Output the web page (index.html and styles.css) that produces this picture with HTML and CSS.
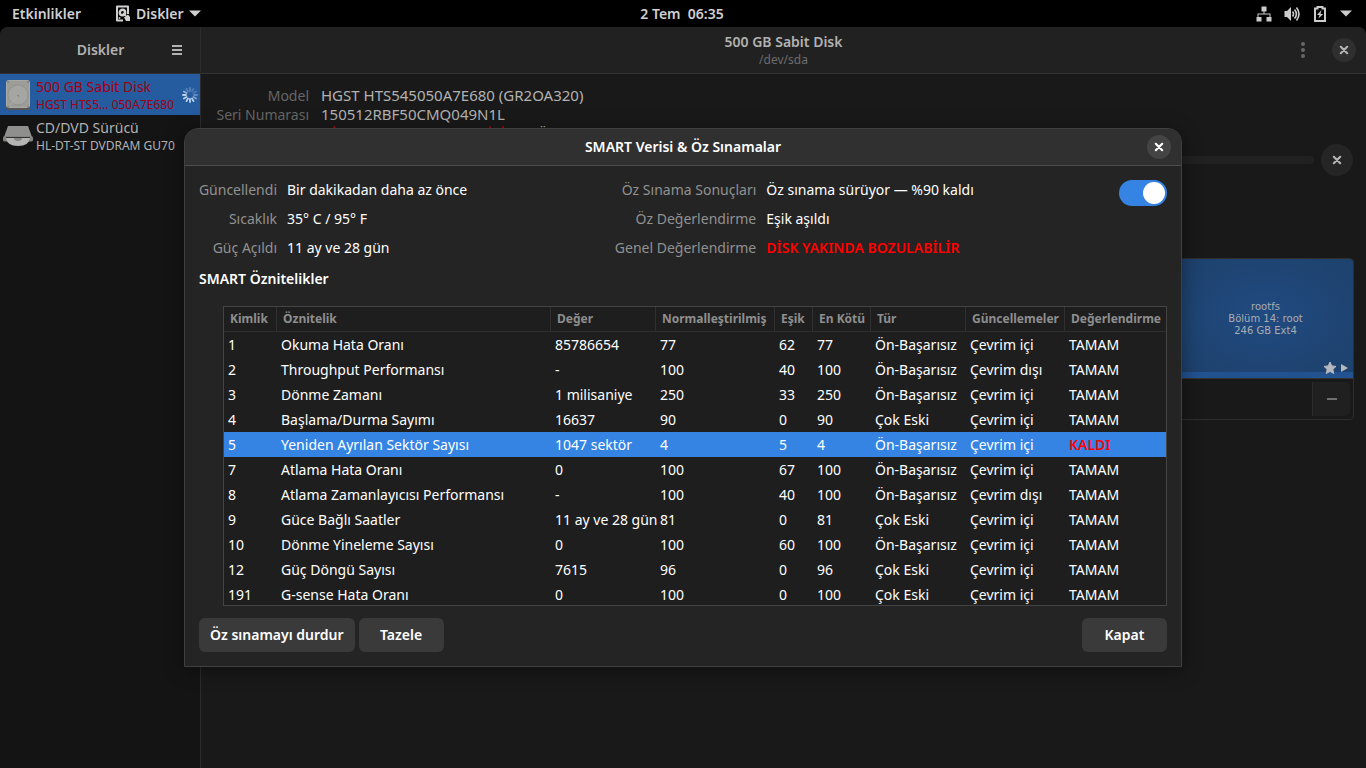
FILE: index.html
```html
<!DOCTYPE html>
<html lang="tr">
<head>
<meta charset="utf-8">
<title>Diskler</title>
<link rel="stylesheet" href="styles.css">
</head>
<body>
<svg class="defs" aria-hidden="true">
  <symbol id="close" viewBox="0 0 16 16"><path d="M4.800 4.800l6.400 6.400M11.200 4.800l-6.400 6.400" fill="none" stroke="currentColor" stroke-width="2.200" stroke-linecap="round"/></symbol>
</svg>

<header class="topbar">
  <div class="topbar-left">
    <button class="top-item">Etkinlikler</button>
    <button class="top-item app-menu">
      <svg width="17" height="17" viewBox="0 0 17 17">
        <path d="M9 15.500H3V1.500H14V9" fill="none" stroke="currentColor" stroke-width="2" stroke-linejoin="round"/>
        <circle cx="8.500" cy="7.500" r="2.700" fill="none" stroke="currentColor" stroke-width="2.400"/>
        <path d="M9 8l3 3" stroke="currentColor" stroke-width="1.600"/>
        <path d="M10 12.500l4-3 2 2.500v4h-4z" fill="currentColor"/>
        <circle cx="5.500" cy="13" r="1" fill="currentColor"/>
      </svg>
      <span>Diskler</span>
      <svg width="12" height="7" viewBox="0 0 12 7"><path d="M0 0.500h12L6 6.500z" fill="currentColor"/></svg>
    </button>
  </div>
  <button class="top-item clock">2 Tem&nbsp; 06:35</button>
  <button class="top-item status" aria-label="Sistem menüsü">
    <svg width="16" height="16" viewBox="0 0 16 16"><path d="M5.500 0.500h5v5h-2v2h6v3.500h1v4.500h-5v-4.500h3v-2.500h-11v2.500h3v4.500h-5v-4.500h1V7.500h6v-2h-2z" fill="currentColor"/></svg>
    <svg width="16" height="16" viewBox="0 0 16 16"><path d="M0.500 5H3l4-4v14l-4-4H0.500z" fill="currentColor"/><path d="M8.500 5.500q2 2.500 0 5M10.500 3.500q3.800 4.500 0 9M12.500 1.500q5 6.500 0 13" fill="none" stroke="currentColor" stroke-width="1.600"/></svg>
    <svg width="16" height="16" viewBox="-2 0 16 16"><path d="M1 2.500h2.500V1h5v1.500H11V15H1z" fill="none" stroke="currentColor" stroke-width="2"/><path d="M7.500 4L3 9h2.500l-1 3.500L9.200 8H6.500z" fill="currentColor"/></svg>
    <svg width="12" height="7" viewBox="0 0 12 7"><path d="M0 0.500h12L6 6.500z" fill="currentColor"/></svg>
  </button>
</header>

<div class="window">
  <aside class="sidebar">
    <div class="bar side-bar">
      <h1 class="bar-title">Diskler</h1>
      <button class="hamburger" aria-label="Menü"><svg width="12" height="12" viewBox="0 0 12 12"><path d="M1 2h10M1 6h10M1 10h10" stroke="currentColor" stroke-width="2"/></svg></button>
    </div>
    <ul class="drives">
      <li class="drive selected">
        <svg class="drive-icon" width="32" height="32" viewBox="0 0 32 32">
          <rect x="4" y="2" width="24" height="29" rx="3" fill="#555"/>
          <rect x="4" y="1" width="24" height="28" rx="3" fill="#a9a9a6"/>
          <rect x="5" y="2" width="22" height="26" rx="2" fill="#9c9c98"/>
          <circle cx="16" cy="16" r="10" fill="#a5a5a1" stroke="#93938f"/>
          <circle cx="16" cy="17" r="1.200" fill="#888"/>
          <path d="M16 17l-8 9" stroke="#b0b0ac"/>
          <path d="M5.500 3h1M25.500 3h1M5.500 28h1M25.500 28h1" stroke="#444"/>
        </svg>
        <div class="drive-text"><span class="drive-name">500 GB Sabit Disk</span><span class="drive-model">HGST HTS5… 050A7E680</span></div>
        <svg class="spinner" width="16" height="16" viewBox="-8 -8 16 16" stroke="#bcd0ea" stroke-width="1.800" stroke-linecap="round">
          <path d="M-4 0h-3"/><path d="M-3.500 2l-2.600 1.500M-2 3.500l-1.500 2.600M0 4v3M2 3.500l1.500 2.600" /><path d="M3.500 2l2.600 1.500" opacity=".6"/><path d="M4 0h3" opacity=".4"/><path d="M3.500-2l2.600-1.500M2-3.500l1.500-2.600" opacity=".25"/><path d="M0-4v-3M-2-3.500l-1.500-2.600" opacity=".35"/><path d="M-3.500-2l-2.600-1.500" opacity=".75"/>
        </svg>
      </li>
      <li class="drive">
        <svg class="drive-icon" width="32" height="32" viewBox="0 0 32 32">
          <path d="M6 6h20l4 11H2z" fill="#8f8f8d"/>
          <path d="M3 17h26q-2 9-13 9T3 17z" fill="#b5b5b3"/>
          <path d="M3 16h26q2 0 2 2v2q0 1.500-2 1.500h-2L28 18H4l1 3.500H3q-2 0-2-1.500v-2q0-2 2-2z" fill="#858583"/>
          <path d="M4 17.500h24" stroke="#333"/>
          <path d="M12 18h8q0 3-4 3t-4-3z" fill="#858583"/>
        </svg>
        <div class="drive-text"><span class="drive-name">CD/DVD Sürücü</span><span class="drive-model">HL-DT-ST DVDRAM GU70</span></div>
      </li>
    </ul>
  </aside>

  <main class="content">
    <div class="bar main-bar">
      <div class="main-title"><h2 class="bar-title">500 GB Sabit Disk</h2><span class="subtitle">/dev/sda</span></div>
      <div class="bar-actions">
        <button class="dots" aria-label="Sürücü seçenekleri"><svg width="6" height="18" viewBox="0 0 6 18"><circle cx="3" cy="3" r="2" fill="currentColor"/><circle cx="3" cy="9" r="2" fill="currentColor"/><circle cx="3" cy="15" r="2" fill="currentColor"/></svg></button>
        <button class="round" aria-label="Pencereyi kapat"><svg width="16" height="16"><use href="#close"/></svg></button>
      </div>
    </div>
    <div class="details">
      <dl class="info">
        <dt>Model</dt><dd>HGST HTS545050A7E680 (GR2OA320)</dd>
        <dt>Seri Numarası</dt><dd>150512RBF50CMQ049N1L</dd>
        <dt>Değerlendirme</dt><dd><b class="failing">DİSK YAKINDA BOZULABİLİR</b> — Öz sınama</dd>
      </dl>
      <div class="job">
        <div class="job-track"></div>
        <button class="round large" aria-label="İşi iptal et"><svg width="16" height="16"><use href="#close"/></svg></button>
      </div>
      <section class="volumes">
        <div class="volume-row">
          <div class="volume">
            <span>rootfs</span><span>Bölüm 14: root</span><span>246 GB Ext4</span>
            <svg class="marks" width="28" height="14" viewBox="0 0 28 14"><path d="M7 1l1.800 3.900 4.200.5-3.100 2.900.8 4.200L7 10.400l-3.700 2.100.8-4.200L1 5.400l4.200-.5z" fill="#b5b8bd" stroke="#b5b8bd"/><path d="M18 3v8l7-4z" fill="#b5b8bd"/></svg>
          </div>
        </div>
        <div class="volume-tools"><button class="minus" aria-label="Bölümü sil"><svg width="10" height="2"><rect width="10" height="2" fill="#707070"/></svg></button></div>
      </section>
    </div>
  </main>

  <div class="overlay">
    <div class="dialog" role="dialog" aria-labelledby="dlg-title">
      <header class="dialog-bar">
        <h2 class="dialog-title" id="dlg-title">SMART Verisi &amp; Öz Sınamalar</h2>
        <button class="round dialog-close" aria-label="Kapat"><svg width="16" height="16"><use href="#close"/></svg></button>
      </header>
      <div class="dialog-body">
        <div class="summary">
          <dl class="facts facts-left">
            <dt>Güncellendi</dt><dd>Bir dakikadan daha az önce</dd>
            <dt>Sıcaklık</dt><dd>35° C / 95° F</dd>
            <dt>Güç Açıldı</dt><dd>11 ay ve 28 gün</dd>
          </dl>
          <dl class="facts facts-right">
            <dt>Öz Sınama Sonuçları</dt><dd>Öz sınama sürüyor — %90 kaldı</dd>
            <dt>Öz Değerlendirme</dt><dd>Eşik aşıldı</dd>
            <dt>Genel Değerlendirme</dt><dd class="failing">DİSK YAKINDA BOZULABİLİR</dd>
          </dl>
          <input class="switch" type="checkbox" role="switch" aria-label="SMART etkin" checked>
        </div>
        <h3 class="section-title">SMART Öznitelikler</h3>
        <div class="table-box">
          <table class="attributes">
            <colgroup><col class="c-id"><col class="c-name"><col class="c-value"><col class="c-norm"><col class="c-thr"><col class="c-worst"><col class="c-type"><col class="c-upd"><col class="c-assess"></colgroup>
            <thead><tr><th>Kimlik</th><th>Öznitelik</th><th>Değer</th><th>Normalleştirilmiş</th><th>Eşik</th><th>En Kötü</th><th>Tür</th><th>Güncellemeler</th><th>Değerlendirme</th></tr></thead>
            <tbody>
              <tr><td>1</td><td>Okuma Hata Oranı</td><td>85786654</td><td>77</td><td>62</td><td>77</td><td>Ön-Başarısız</td><td>Çevrim içi</td><td>TAMAM</td></tr>
              <tr><td>2</td><td>Throughput Performansı</td><td>-</td><td>100</td><td>40</td><td>100</td><td>Ön-Başarısız</td><td>Çevrim dışı</td><td>TAMAM</td></tr>
              <tr><td>3</td><td>Dönme Zamanı</td><td>1 milisaniye</td><td>250</td><td>33</td><td>250</td><td>Ön-Başarısız</td><td>Çevrim içi</td><td>TAMAM</td></tr>
              <tr><td>4</td><td>Başlama/Durma Sayımı</td><td>16637</td><td>90</td><td>0</td><td>90</td><td>Çok Eski</td><td>Çevrim içi</td><td>TAMAM</td></tr>
              <tr class="current"><td>5</td><td>Yeniden Ayrılan Sektör Sayısı</td><td>1047 sektör</td><td>4</td><td>5</td><td>4</td><td>Ön-Başarısız</td><td>Çevrim içi</td><td class="failing">KALDI</td></tr>
              <tr><td>7</td><td>Atlama Hata Oranı</td><td>0</td><td>100</td><td>67</td><td>100</td><td>Ön-Başarısız</td><td>Çevrim içi</td><td>TAMAM</td></tr>
              <tr><td>8</td><td>Atlama Zamanlayıcısı Performansı</td><td>-</td><td>100</td><td>40</td><td>100</td><td>Ön-Başarısız</td><td>Çevrim dışı</td><td>TAMAM</td></tr>
              <tr><td>9</td><td>Güce Bağlı Saatler</td><td>11 ay ve 28 gün</td><td>81</td><td>0</td><td>81</td><td>Çok Eski</td><td>Çevrim içi</td><td>TAMAM</td></tr>
              <tr><td>10</td><td>Dönme Yineleme Sayısı</td><td>0</td><td>100</td><td>60</td><td>100</td><td>Ön-Başarısız</td><td>Çevrim içi</td><td>TAMAM</td></tr>
              <tr><td>12</td><td>Güç Döngü Sayısı</td><td>7615</td><td>96</td><td>0</td><td>96</td><td>Çok Eski</td><td>Çevrim içi</td><td>TAMAM</td></tr>
              <tr><td>191</td><td>G-sense Hata Oranı</td><td>0</td><td>100</td><td>0</td><td>100</td><td>Çok Eski</td><td>Çevrim içi</td><td>TAMAM</td></tr>
            </tbody>
          </table>
        </div>
        <footer class="actions">
          <button class="btn btn-wide">Öz sınamayı durdur</button>
          <button class="btn">Tazele</button>
          <button class="btn btn-close">Kapat</button>
        </footer>
      </div>
    </div>
  </div>
</div>
</body>
</html>
```
FILE: styles.css
```css
* { box-sizing: border-box; }
body {
  margin: 0;
  height: 100vh;
  display: flex;
  flex-direction: column;
  overflow: hidden;
  background: #000;
  color: #b2b2b2;
  font: 14px/20px "Noto Sans", "Open Sans", sans-serif;
}
h1, h2, h3, dl, dd, ul { margin: 0; padding: 0; }
button { font: inherit; color: inherit; background: none; border: 0; padding: 0; }
svg { display: block; flex: none; }
.defs { position: absolute; width: 0; height: 0; }
.failing { color: #ff0000; font-weight: 600; }

/* Top bar */
.topbar {
  display: grid;
  grid-template-columns: 1fr auto 1fr;
  align-items: center;
  height: 27px;
  padding: 0 14px 0 12px;
  color: #d0d0d0;
}
.top-item { display: flex; align-items: center; font-weight: 600; }
.topbar-left { display: flex; gap: 33px; }
.app-menu { gap: 5px; }
.status { justify-self: end; gap: 12px; color: #ccc; }

/* Window */
.window {
  position: relative;
  flex: 1;
  min-height: 0;
  display: flex;
  overflow: hidden;
  border-radius: 8px 8px 0 0;
  background: #191919;
}
.bar {
  display: grid;
  align-items: center;
  height: 47px;
  background: #212121;
  border-bottom: 1px solid #333;
}
.bar-title { font-size: 14px; line-height: 20px; font-weight: 600; text-align: center; }
.sidebar { width: 201px; border-right: 1px solid #2c2c2c; background: #141414; }
.side-bar { grid-template-columns: 153px 1fr; }
.side-bar .bar-title { padding-left: 48px; }
.hamburger { justify-self: center; }
.drives { list-style: none; }
.drive { display: flex; align-items: center; height: 41px; padding: 0 2px; gap: 2px; overflow: hidden; }
.selected { background: #255b9f; color: #a30010; }
.drive-text { display: flex; flex-direction: column; white-space: nowrap; min-width: 0; flex: 1; }
.drive-name { font-size: 14px; line-height: 20px; }
.drive-model { font-size: 12px; line-height: 16px; }

.content { flex: 1; min-width: 0; display: flex; flex-direction: column; }
.main-bar { grid-template-columns: 80px 1fr 80px; }
.main-title { grid-column: 2; text-align: center; }
.subtitle { display: block; font-size: 12px; line-height: 16px; color: #6c6c6c; }
.bar-actions { display: flex; align-items: center; justify-content: flex-end; gap: 26px; padding-right: 10px; }
.dots { color: #666; }
.round {
  display: grid;
  place-items: center;
  width: 24px;
  height: 24px;
  border-radius: 50%;
  background: #2f2f2f;
}
.large { width: 32px; height: 32px; background: #252525; }

.details { display: flex; flex-direction: column; padding: 12px; }
.info { display: grid; grid-template-columns: 96px 1fr; column-gap: 12px; line-height: 19px; white-space: nowrap; }
.info dt { justify-self: end; color: #666; }
.info dd { font-size: 15px; }
.info .failing { color: #b20000; font-size: 14px; }
.job { display: flex; align-items: center; gap: 7px; padding-right: 1px; margin-top: 1px; }
.job-track { flex: 1; height: 8px; border-radius: 4px; background: #212121; }
.volumes { margin-top: 82px; border: 1px solid #2e2e2e; border-radius: 4px; overflow: hidden; }
.volume-row { display: flex; justify-content: flex-end; border-bottom: 1px solid #333; }
.volume {
  position: relative;
  display: flex;
  flex-direction: column;
  align-items: center;
  justify-content: center;
  width: 175px;
  height: 119px;
  padding-top: 6px;
  background: radial-gradient(#204a80, #1e416c);
  border-bottom: 6px solid #225290;
  font: 10px/12px "DejaVu Sans", sans-serif;
  color: #a9adb3;
}
.marks { position: absolute; right: 2px; bottom: -3px; }
.volume-tools { display: flex; justify-content: flex-end; padding: 3px; }
.minus { display: grid; place-items: center; width: 38px; height: 34px; background: #202020; border-left: 1px solid #2b2b2b; border-radius: 0 5px 5px 0; }

/* Dialog */
.overlay {
  position: absolute;
  inset: 0;
  display: grid;
  place-items: center;
}
.dialog {
  width: 73vw;
  min-width: 998px;
  background: #242424;
  border: 1px solid #404040;
  border-radius: 14px 14px 0 0;
  box-shadow: 0 3px 20px rgba(0, 0, 0, .4);
  color: #fff;
  overflow: hidden;
}
.dialog-bar {
  display: grid;
  grid-template-columns: 24px 1fr 24px;
  align-items: center;
  height: 37px;
  padding: 0 10px;
  background: #303030;
  border-bottom: 1px solid #4c4c4c;
}
.dialog-title { grid-column: 2; font-size: 14px; line-height: 20px; font-weight: 600; text-align: center; }
.dialog-close { background: #444; }
.dialog-body { padding: 14px; }
.summary { display: grid; grid-template-columns: 3fr 4fr 48px; align-items: start; }
.facts { display: grid; gap: 9px 10px; white-space: nowrap; }
.facts dt { justify-self: end; color: #919191; }
.facts-left { grid-template-columns: 78px 1fr; }
.facts-right { grid-template-columns: 142px 1fr; padding-left: 21px; }
.switch {
  appearance: none;
  width: 48px;
  height: 26px;
  margin: 0;
  padding: 2px;
  border-radius: 13px;
  background: #3584e4;
}
.switch::before {
  content: "";
  display: block;
  width: 22px;
  height: 22px;
  margin-left: auto;
  border-radius: 50%;
  background: #fff;
}
.section-title { margin: 11px 0 17px; font-size: 14px; line-height: 20px; font-weight: 600; }
.table-box { height: 300px; margin-left: 24px; overflow: hidden; border: 1px solid #444; background: #1e1e1e; }
.attributes { width: 100%; table-layout: fixed; border-collapse: separate; border-spacing: 0; white-space: nowrap; }
.attributes th {
  height: 25px;
  padding: 0 0 0 6px;
  border-bottom: 1px solid #303030;
  border-right: 1px solid #303030;
  color: #8e8e8e;
  font-size: 12px;
  font-weight: 700;
  text-align: left;
}
.attributes th:last-child { border-right: 0; }
.attributes td { height: 25px; padding: 0 0 0 4px; }
.current { background: #3584e4; }
.c-id { width: 53px; }
.c-value { width: 105px; }
.c-norm { width: 119px; }
.c-thr { width: 38px; }
.c-worst { width: 58px; }
.c-type { width: 95px; }
.c-upd { width: 99px; }
.c-assess { width: 101px; }
.actions { display: flex; gap: 4px; margin-top: 12px; }
.btn { min-width: 85px; height: 34px; border-radius: 6px; background: #3a3a3a; font-weight: 600; }
.btn-wide { padding: 0 11px; }
.btn-close { margin-left: auto; }
```
